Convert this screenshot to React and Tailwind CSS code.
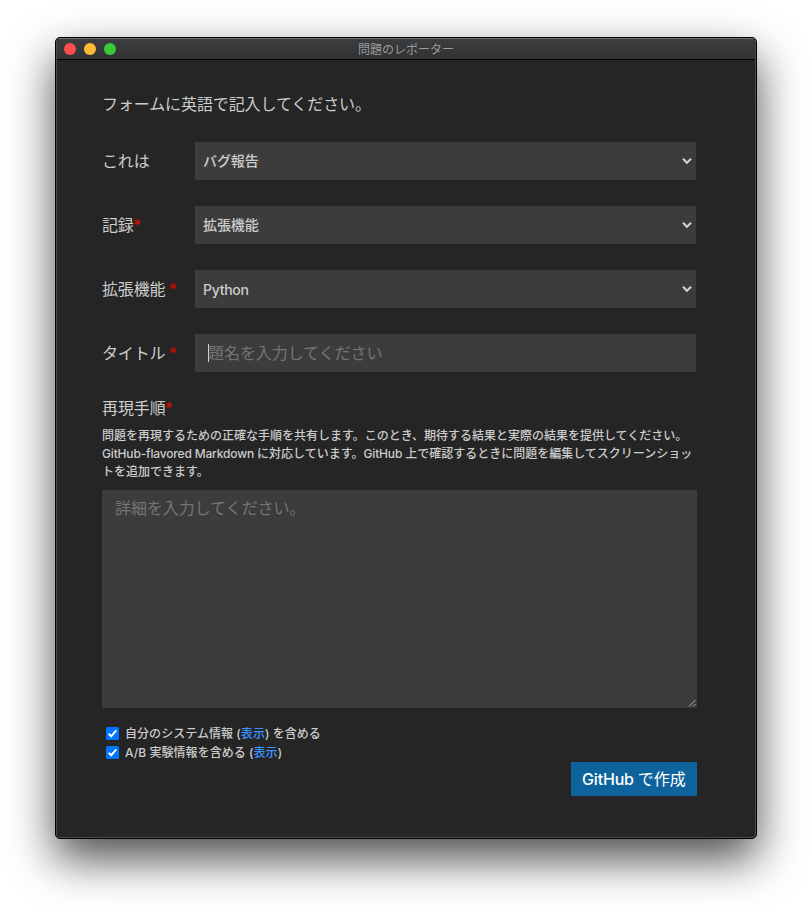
import React from "react";

const options = "flex h-[38px] w-[501px] items-center bg-[#3c3c3c]";

function Star({ spaced }) {
  return (
    <span className={spaced ? "ml-[3px] font-semibold text-[#be1100]" : "-ml-px font-semibold text-[#be1100]"}>*</span>
  );
}

function Row({ label, star, spaced, children }) {
  return (
    <div className="flex h-[38px] items-center">
      <div className="w-[93px] whitespace-nowrap pb-px text-[16px] leading-6 tracking-[-0.15px]">
        {label}
        {star && <Star spaced={spaced} />}
      </div>
      {children}
    </div>
  );
}

function Select({ value, latin }) {
  return (
    <div className={options + " justify-between pl-2 pr-1 text-[14px] font-medium"}>
      <span className={latin ? "pt-px leading-5 tracking-[-0.3px]" : "leading-5 tracking-[-0.1px]"}>{value}</span>
      <svg width="10" height="8" viewBox="0 0 10 8" fill="none">
        <path d="M1 1.8 5 5.8 9 1.8" stroke="#d4d4d4" strokeWidth="2" />
      </svg>
    </div>
  );
}

function Check({ children }) {
  return (
    <div className="flex h-[19px] items-center gap-[6px] pl-1 text-[12px] font-medium leading-[18px]">
      <svg width="13" height="13" viewBox="0 0 13 13" fill="none">
        <rect width="13" height="13" rx="1.5" fill="#0075ff" />
        <path d="M2.7 6.8 5.2 9.2 10.3 3.3" stroke="#fff" strokeWidth="2" />
      </svg>
      <span className="whitespace-nowrap tracking-[0.05px]">{children}</span>
    </div>
  );
}

export default function App() {
  return (
    <div className="h-[912px] w-[812px] overflow-hidden bg-white pl-[55px] pt-[37px] font-['Inter','Noto_Sans_CJK_JP',sans-serif] text-[#cccccc]">
      <div className="h-[802px] w-[702px] overflow-hidden rounded-[5px] border border-black bg-[#252525] shadow-[0_20px_46px_rgba(0,0,0,0.7)]">
        <div className="flex h-full flex-col rounded-[4px] border border-[#4c4c4c] border-t-[#727374]">
          <div className="grid h-[21px] shrink-0 grid-cols-[1fr_auto_1fr] items-center border-b border-black bg-linear-to-b from-[#3b3d3e] to-[#303233]">
            <div className="flex gap-2 pb-px pl-[7px]">
              <span className="size-3 rounded-full bg-[#fc4f4d]" />
              <span className="size-3 rounded-full bg-[#fdbc35]" />
              <span className="size-3 rounded-full bg-[#37cb3c]" />
            </div>
            <div className="pt-px text-[12px] leading-5 text-[#9b9c9d]">問題のレポーター</div>
          </div>

          <div className="flex flex-col pl-[45px] pt-8">
            <div className="text-[16px] leading-6 tracking-[-0.1px]">フォームに英語で記入してください。</div>

            <div className="mt-[26px] flex flex-col gap-[26px]">
              <Row label="これは">
                <Select value="バグ報告" />
              </Row>
              <Row label="記録" star>
                <Select value="拡張機能" />
              </Row>
              <Row label="拡張機能" star spaced>
                <Select value="Python" latin />
              </Row>
              <Row label="タイトル" star spaced>
                <div className={options + " pl-[13px]"}>
                  <span className="h-[18px] w-px bg-[#d4d4d4]" />
                  <span className="-ml-px pb-px text-[16px] leading-6 tracking-[-0.05px] text-[#757575]">
                    題名を入力してください
                  </span>
                </div>
              </Row>
            </div>

            <div className="mt-6 text-[16px] leading-6 tracking-[-0.1px]">
              再現手順
              <Star />
            </div>
            <div className="mt-[7px] flex flex-col whitespace-nowrap text-[12px] font-medium leading-[18px]">
              <span>問題を再現するための正確な手順を共有します。このとき、期待する結果と実際の結果を提供してください。</span>
              <span>
                <span className="tracking-[-0.17px]">GitHub-flavored Markdown </span>
                に対応しています。
                <span className="tracking-[-0.17px]">GitHub </span>
                上で確認するときに問題を編集してスクリーンショッ
              </span>
              <span>トを追加できます。</span>
            </div>

            <div className="mt-[9px] flex h-[218px] w-[595px] justify-between bg-[#3c3c3c] pl-[13px] pt-[6px]">
              <span className="text-[16px] leading-6 tracking-[-0.05px] text-[#757575]">詳細を入力してください。</span>
              <svg width="9" height="9" viewBox="0 0 9 9" className="self-end" stroke="#c0c0c0" strokeWidth="0.9">
                <path d="M1 7.5 7.5 1M5 7.5 7.5 5" />
              </svg>
            </div>

            <div className="mt-4 flex flex-col">
              <Check>
                自分のシステム情報 (<span className="text-[#3794ff]">表示</span>) を含める
              </Check>
              <Check>
                A/B 実験情報を含める (<span className="text-[#3794ff]">表示</span>)
              </Check>
            </div>
            <div className="flex w-[595px] justify-end">
              <button className="flex h-[34px] w-[126px] items-center justify-center whitespace-pre bg-[#0e639c] text-[16px] leading-6 text-white">
                <span className="font-medium tracking-[-0.2px]">GitHub </span>
                <span>で作成</span>
              </button>
            </div>
          </div>
        </div>
      </div>
    </div>
  );
}
